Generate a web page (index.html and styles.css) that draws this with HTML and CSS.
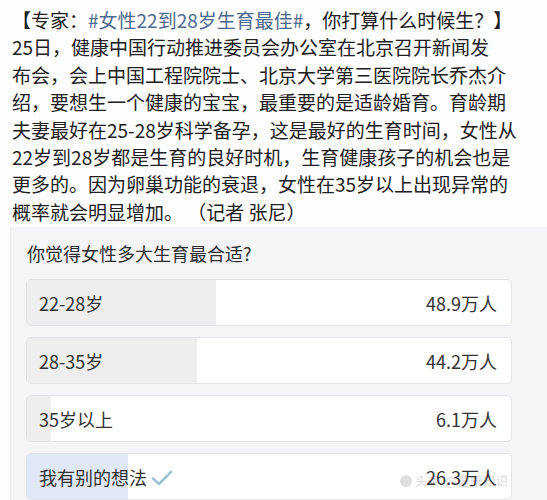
FILE: index.html
```html
<!DOCTYPE html>
<html lang="zh-CN">
<head>
<meta charset="utf-8">
<link rel="stylesheet" href="styles.css">
</head>
<body>
<div class="page">
  <div class="article">
    <p class="line">【专家：<span class="tag">#女性22到28岁生育最佳#</span>，你打算什么时候生？】</p>
    <p class="line">25日，健康中国行动推进委员会办公室在北京召开新闻发</p>
    <p class="line">布会，会上中国工程院院士、北京大学第三医院院长乔杰介</p>
    <p class="line">绍，要想生一个健康的宝宝，最重要的是适龄婚育。育龄期</p>
    <p class="line">夫妻最好在25-28岁科学备孕，这是最好的生育时间，女性从</p>
    <p class="line">22岁到28岁都是生育的良好时机，生育健康孩子的机会也是</p>
    <p class="line">更多的。因为卵巢功能的衰退，女性在35岁以上出现异常的</p>
    <p class="line">概率就会明显增加。 （记者 张尼）</p>
  </div>
  <div class="poll">
    <div class="poll-title">你觉得女性多大生育最合适?</div>
    <div class="options">
      <div class="option">
        <div class="fill" style="width:38.96%"></div>
        <span class="label">22-28岁</span>
        <span class="count">48.9万人</span>
      </div>
      <div class="option">
        <div class="fill" style="width:35.22%"></div>
        <span class="label">28-35岁</span>
        <span class="count">44.2万人</span>
      </div>
      <div class="option">
        <div class="fill" style="width:4.86%"></div>
        <span class="label">35岁以上</span>
        <span class="count">6.1万人</span>
      </div>
      <div class="option chosen">
        <div class="fill" style="width:20.96%"></div>
        <span class="watermark"><span class="wm-dot"></span>头条 @健康知识</span>
        <span class="label">我有别的想法
          <svg class="check" width="22" height="16" viewBox="0 0 22 16"><path d="M2 8.5 L8 14 L20 2" fill="none" stroke="#9cc3d6" stroke-width="2.6" stroke-linecap="round" stroke-linejoin="round"/></svg>
        </span>
        <span class="count">26.3万人</span>
      </div>
    </div>
  </div>
</div>
</body>
</html>
```
FILE: styles.css
```css
html, body {
  margin: 0;
  padding: 0;
  background: #ffffff;
}
.page {
  width: 547px;
  height: 500px;
  overflow: hidden;
  font-family: "Noto Sans CJK SC", "Noto Sans", sans-serif;
  background: #fdfdfd;
}
.article {
  padding: 6px 10px 0 12px;
  color: #202020;
  font-size: 19px;
  line-height: 27.4px;
  height: 221px;
}
.line {
  margin: 0;
  white-space: pre;
}
.tag {
  color: #4d6a8f;
}
.poll {
  margin-left: 10px;
  background: #f5f5f7;
  padding: 13px 35px 20px 15px;
  border-left: 1px solid #f0f0f2;
}
.poll-title {
  font-size: 18px;
  line-height: 26px;
  color: #2e2e2e;
  padding-left: 1px;
  margin-bottom: 13px;
}
.options {
  display: flex;
  flex-direction: column;
  gap: 11px;
}
.option {
  position: relative;
  height: 45px;
  border: 1px solid #e4e4e6;
  border-radius: 5px;
  background: #ffffff;
  display: flex;
  align-items: center;
  justify-content: space-between;
  padding: 0 14px 0 12px;
  overflow: hidden;
  font-size: 18px;
  color: #333333;
}
.fill {
  position: absolute;
  left: 0;
  top: 0;
  bottom: 0;
  background: #eeeeef;
}
.chosen .fill {
  background: #dfe8f4;
}
.label, .count {
  position: relative;
  display: flex;
  align-items: center;
  gap: 4px;
}
.check {
  margin-top: 2px;
}
.watermark {
  position: absolute;
  right: 2px;
  top: 20px;
  font-size: 12px;
  line-height: 14px;
  color: rgba(150, 150, 150, 0.4);
  display: flex;
  align-items: center;
  gap: 3px;
  letter-spacing: 1px;
}
.wm-dot {
  width: 12px;
  height: 12px;
  border-radius: 50%;
  background: rgba(150, 150, 150, 0.3);
}
```
